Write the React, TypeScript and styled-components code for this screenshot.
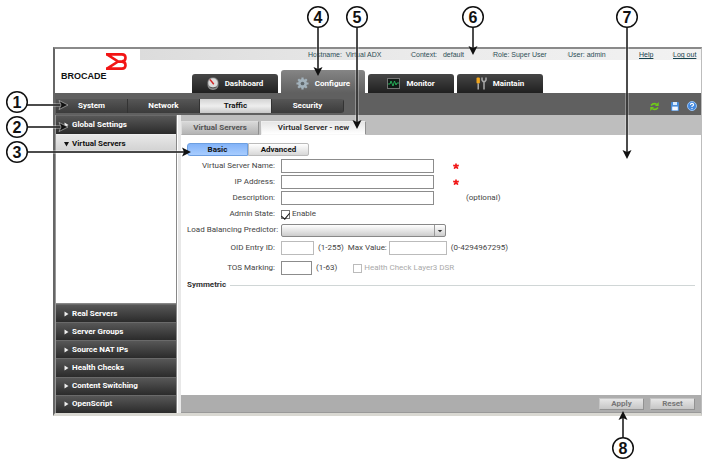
import React from 'react';
import styled, { createGlobalStyle, css } from 'styled-components';

const GlobalStyle = createGlobalStyle`
  * { box-sizing: border-box; }
  body { margin: 0; background: #fff; font-family: Roboto, 'Liberation Sans', Arial, sans-serif; font-size: 8px; line-height: 10px; color: #444; }
  button, input, select { font: inherit; color: inherit; margin: 0; padding: 0; border-radius: 0; }
`;

const Page = styled.div`
  position: relative;
  display: flex;
  min-height: 100vh;
  padding: 47px 0 46px 53px;
`;

const Frame = styled.div`
  flex: 1;
  display: flex;
  flex-direction: column;
  border-style: solid;
  border-width: 2px 1px 3px 2px;
  border-color: #8a8a8a #bdbdbd #d9d8d2 #666;
  min-width: 0;
`;

const Header = styled.header`
  display: flex;
  height: 44px;
`;

const Brand = styled.div`
  display: flex;
  flex-direction: column;
  width: 85px;
  padding: 4px 0 0 6px;
  color: #111;
  font-family: 'Liberation Sans', Arial, sans-serif;
  font-size: 9px;
  font-weight: bold;
  svg { margin-left: 44px; }
`;

const HeaderMain = styled.div`
  flex: 1;
  display: flex;
  flex-direction: column;
  justify-content: space-between;
`;

const InfoBar = styled.div`
  display: grid;
  grid-template-columns: 103px 82px 75px 71px 34px 1fr;
  height: 11px;
  padding-left: 168px;
  background: linear-gradient(90deg, #dcdcdc, #ebebeb 50%, #f2f2f2);
  color: #2d4d55;
  font-family: 'Liberation Sans', Arial, sans-serif;
  font-size: 7px;
  line-height: 11px;
  white-space: nowrap;
  a { color: #17424e; }
`;

const InfoItem = styled.span<{ $divided?: boolean }>`
  white-space: pre;
  ${(p) => p.$divided && css`box-shadow: -5px 0 0 -4px #ddd;`}
`;

const MainNav = styled.nav`
  display: flex;
  align-items: flex-end;
  gap: 3px;
  padding-left: 52px;
`;

const MainTab = styled.button<{ $active?: boolean }>`
  display: flex;
  align-items: center;
  justify-content: center;
  gap: 6px;
  width: ${(p) => (p.$active ? 84 : 86)}px;
  height: ${(p) => (p.$active ? 23 : 19)}px;
  padding-top: ${(p) => (p.$active ? 4 : 0)}px;
  border: 0;
  border-radius: 3px 3px 0 0;
  background: ${(p) => (p.$active ? 'linear-gradient(#858585, #606060)' : 'linear-gradient(#464646, #202020)')};
  color: #fff;
  font-weight: bold;
`;

const SubBar = styled.div`
  display: flex;
  align-items: center;
  justify-content: space-between;
  height: 22px;
  padding: 4px 4px 0 1px;
  background: #606060;
`;

const SubNav = styled.nav`
  display: flex;
  border-radius: 0 3px 3px 0;
  overflow: hidden;
`;

const SubTab = styled.button<{ $active?: boolean }>`
  width: 72px;
  height: 14px;
  border: 0;
  border-right: 1px solid #333;
  background: ${(p) => (p.$active ? 'linear-gradient(#d4d4d4, #eee 50%, #c8c8c8)' : 'linear-gradient(#565656, #3b3b3b)')};
  color: ${(p) => (p.$active ? '#111' : '#fff')};
  font-weight: bold;
`;

const Tools = styled.div`
  display: flex;
  align-items: center;
  gap: 8px;
`;

const ToolButton = styled.button`
  display: flex;
  border: 0;
  background: none;
  &:first-child { margin-right: 4px; }
`;

const Body = styled.div`
  flex: 1;
  display: flex;
`;

const Sidebar = styled.aside`
  display: flex;
  flex-direction: column;
  width: 122px;
  border-left: 1px solid #999;
  border-right: 1px solid #888;
`;

const SideFill = styled.div`
  flex: 1;
`;

const SideItem = styled.button<{ $open?: boolean }>`
  display: flex;
  align-items: center;
  gap: 3px;
  height: 19px;
  padding: 0 8px;
  border: 0;
  border-top: 1px solid ${(p) => (p.$open ? '#eee' : '#6a6a6a')};
  background: ${(p) => (p.$open ? 'linear-gradient(#e8e8e8, #cfcfcf)' : 'linear-gradient(#575757, #2b2b2b)')};
  color: ${(p) => (p.$open ? '#111' : '#fff')};
  font-weight: bold;
  text-align: left;
`;

const SideGroup = styled.div`
  display: grid;
  grid-auto-rows: 1fr;
  height: 110px;
  border-top: 1px solid #888;
  ${SideItem} { height: auto; }
`;

const Content = styled.main`
  flex: 1;
  display: flex;
  flex-direction: column;
  margin-left: 1px;
  border-left: 3px solid #e8e8e8;
  min-width: 0;
`;

const DocTabs = styled.div`
  display: flex;
  align-items: flex-end;
  gap: 2px;
  height: 20px;
  background: #bebebe;
`;

const DocTab = styled.button<{ $active?: boolean }>`
  width: ${(p) => (p.$active ? 105 : 78)}px;
  height: 14px;
  border: 1px solid #8f8f8f;
  border-color: ${(p) => (p.$active ? '#eee #8f8f8f #f8f8f8 #eee' : '#ddd #8f8f8f #aaa #ddd')};
  background: ${(p) => (p.$active ? 'linear-gradient(#e6e6e6, #fff)' : 'linear-gradient(#d8d8d8, #b4b4b4)')};
  color: ${(p) => (p.$active ? '#333' : '#555')};
  font-weight: bold;
`;

const Form = styled.form`
  flex: 1;
  padding: 8px 6px 0;
`;

const ModeSwitch = styled.div`
  display: flex;
  margin-bottom: 2px;
`;

const ModeButton = styled.button<{ $active?: boolean }>`
  width: 61px;
  height: 13px;
  border: 1px solid ${(p) => (p.$active ? '#6d9fe0' : '#bbb')};
  border-radius: ${(p) => (p.$active ? '3px 0 0 3px' : '0 2px 2px 0')};
  background: ${(p) => (p.$active ? 'linear-gradient(#83b3f8, #a8cdff)' : 'linear-gradient(#fff, #d8d8d8)')};
  color: #111;
  font-weight: bold;
`;

const Row = styled.div<{ $tall?: boolean }>`
  display: grid;
  grid-template-columns: 88px 1fr;
  align-items: center;
  column-gap: 6px;
  height: ${(p) => (p.$tall ? 20 : 16)}px;
`;

const Label = styled.label<{ $disabled?: boolean }>`
  color: ${(p) => (p.$disabled ? '#aaa' : '#444')};
  text-align: right;
  white-space: nowrap;
`;

const Fields = styled.div`
  display: flex;
  align-items: center;
  white-space: nowrap;
`;

const TextInput = styled.input<{ $width: number; $light?: boolean }>`
  width: ${(p) => p.$width}px;
  height: 14px;
  border: 1px solid ${(p) => (p.$light ? '#bbb' : '#8c8c8c')};
  background: #fff;
  padding: 0 2px;
`;

const Required = styled.span`
  display: flex;
  margin-left: 19px;
`;

const Note = styled.span`
  margin-left: 32px;
`;

const Range = styled.span`
  margin: 0 4px;
`;

const Check = styled.input`
  appearance: none;
  display: grid;
  place-items: center;
  width: 9px;
  height: 9px;
  margin-right: 2px;
  border: 1px solid #777;
  background: #fff;
  &:disabled { border-color: #bbb; }
  &:checked::after {
    content: '';
    width: 4px;
    height: 7px;
    border: solid #111;
    border-width: 0 1px 1px 0;
    transform: rotate(40deg);
  }
`;

const HealthCheck = styled.div`
  display: flex;
  align-items: center;
  margin-left: 12px;
`;

const SelectWrap = styled.div`
  display: grid;
  grid-template-columns: 1fr 11px;
  width: 165px;
  height: 13px;
  border: 1px solid #888;
  border-radius: 2px;
  background: linear-gradient(#fff, #ccc);
  select { grid-area: 1 / 1 / 2 / 3; appearance: none; border: 0; background: none; }
  svg { grid-area: 1 / 2; border-left: 1px solid #999; pointer-events: none; }
`;

const Fieldset = styled.div`
  display: flex;
  align-items: center;
  gap: 4px;
  height: 14px;
  color: #333;
  font-weight: bold;
  &::after { content: ''; flex: 1; height: 1px; background: #d0d6d6; }
`;

const Footer = styled.footer`
  display: flex;
  align-items: center;
  justify-content: flex-end;
  gap: 6px;
  height: 18px;
  padding-right: 6px;
  background: #adadad;
  border-bottom: 1px solid #999;
`;

const ActionButton = styled.button`
  width: 45px;
  height: 12px;
  border: 1px solid #c5c5c5;
  border-right-color: #929292;
  border-bottom-color: #929292;
  background: linear-gradient(#e6e6e6, #c6c6c6);
  color: #777;
  font-weight: bold;
`;

const CalloutLayer = styled.svg`
  position: absolute;
  top: 0;
  left: 0;
  pointer-events: none;
  text { font-family: 'Liberation Sans', Arial, sans-serif; font-size: 16px; font-weight: bold; text-anchor: middle; fill: #111; }
`;

const BrandMark = () => (
  <svg width="23" height="18" viewBox="0 0 23 18" fill="none" stroke="#f21515" strokeWidth="2.6">
    <path d="M1 1.4H17Q20.5 1.4 20.5 4.8T17 8.4L12.5 8.5 17 8.6Q20.5 8.8 20.5 12.2T17 15.6H1M2 1.4L13 8.5 2 15.6" />
  </svg>
);

const DialIcon = () => (
  <svg width="12" height="14" viewBox="0 0 12 14">
    <rect x=".5" y=".5" width="11" height="12.5" rx="5" fill="#8a8a8a" />
    <circle cx="6" cy="6" r="4.7" fill="#dcdcdc" />
    <path d="M3 2.5L6.8 7.2" stroke="#d32525" strokeWidth="1.4" />
    <path d="M2.5 10Q6 12 9.5 10" stroke="#555" fill="none" />
  </svg>
);

const GearIcon = () => (
  <svg width="13" height="13" viewBox="-7 -7 14 14">
    <g stroke="#a3b2bc" strokeWidth="2.4">
      <path d="M0-6.5V6.5M-6.5 0H6.5M-4.6-4.6L4.6 4.6M4.6-4.6L-4.6 4.6" />
    </g>
    <circle r="4.8" fill="#a3b2bc" />
    <circle r="2" fill="#5f676c" />
  </svg>
);

const PulseIcon = () => (
  <svg width="13" height="11" viewBox="0 0 13 11">
    <rect x=".5" y=".5" width="12" height="10" fill="#101a15" stroke="#747474" />
    <path d="M1 6H3L4 3 6 8 7.5 3 9 7 10 5H12" stroke="#26b55b" fill="none" strokeWidth=".9" />
  </svg>
);

const ToolsIcon = () => (
  <svg width="11" height="13" viewBox="0 0 11 13">
    <rect x=".5" y=".5" width="3.4" height="6" rx="1" fill="#f2a61c" />
    <path d="M2.2 6.5V12.5" stroke="#bbb" strokeWidth="1.3" />
    <path d="M6 .5V3L7 4.4H9L10 3V.5M8 4V12.5" stroke="#aaa" strokeWidth="1.5" fill="none" />
  </svg>
);

const RefreshIcon = () => (
  <svg width="9" height="9" viewBox="0 0 9 9" fill="none" stroke="#6fcb18" strokeWidth="1.6">
    <path d="M1 3.4Q3.5.3 6.7 2.4M8 5.6Q5.5 8.7 2.3 6.6" />
    <path d="M8.7 0V4H5ZM.3 9V5H4Z" fill="#6fcb18" stroke="none" />
  </svg>
);

const SaveIcon = () => (
  <svg width="8" height="9" viewBox="0 0 8 9">
    <rect width="8" height="9" rx="1" fill="#4a8dd8" />
    <rect x="2" width="4" height="3" fill="#d9ebff" />
    <rect x="1.2" y="4.6" width="5.6" height="3.8" fill="#f4f8ff" />
  </svg>
);

const HelpIcon = () => (
  <svg width="10" height="10" viewBox="0 0 10 10">
    <circle cx="5" cy="5" r="4.5" fill="#4388df" stroke="#9ac3f2" />
    <path d="M3.4 3.9Q3.5 2.4 5 2.4T6.6 3.8Q6.6 4.7 5 5.3V6.1M5 6.9V8" fill="none" stroke="#fff" strokeWidth="1.1" />
  </svg>
);

const StarIcon = () => (
  <svg width="6" height="6" viewBox="0 0 6 6" stroke="#f01818" strokeWidth="1.7">
    <path d="M3 3V.5M3 3L.2 2.4M3 3L5.8 2.4M3 3L1.2 5.7M3 3L4.8 5.7" />
  </svg>
);

const Arrow = ({ open }: { open?: boolean }) => (
  <svg width="5" height="6" viewBox="0 0 5 6">
    {open ? <path d="M0 1H5L2.5 5.5Z" fill="#111" /> : <path d="M.5.5L4.5 3 .5 5.5Z" fill="#eee" />}
  </svg>
);

type Callout = { n: number; x: number; y: number; tipX: number; tipY: number };

const callouts: Callout[] = [
  { n: 1, x: 17, y: 102, tipX: 68, tipY: 105 },
  { n: 2, x: 17, y: 127, tipX: 68, tipY: 127 },
  { n: 3, x: 17, y: 152, tipX: 191, tipY: 152 },
  { n: 4, x: 318, y: 17, tipX: 318, tipY: 76 },
  { n: 5, x: 357, y: 17, tipX: 357, tipY: 129 },
  { n: 6, x: 473, y: 17, tipX: 473, tipY: 55 },
  { n: 7, x: 627, y: 17, tipX: 627, tipY: 159 },
  { n: 8, x: 623, y: 448, tipX: 623, tipY: 411 },
];

const CalloutMark = ({ n, x, y, tipX, tipY }: Callout) => {
  const horizontal = tipX !== x;
  const down = tipY > y;
  const angle = horizontal ? 0 : down ? 90 : -90;
  const line = horizontal
    ? `M${x + 10} ${tipY}H${tipX - 5}`
    : `M${x} ${down ? y + 10 : y - 10}V${down ? tipY - 5 : tipY + 5}`;
  return (
    <g>
      <path d={line} stroke="#fff" strokeWidth="3" opacity=".6" />
      <path d={line} stroke="#111" strokeWidth="1.5" />
      <path
        d="M0 0L-9-4.5-7 0-9 4.5Z"
        fill="#111"
        stroke={n < 3 ? '#ccc' : 'none'}
        strokeWidth=".6"
        transform={`translate(${tipX} ${tipY}) rotate(${angle})`}
      />
      <circle cx={x} cy={y} r="10.3" fill="#fff" stroke="#111" strokeWidth="1.5" />
      <text x={x} y={y + 6}>{n}</text>
    </g>
  );
};

const sections = ['Real Servers', 'Server Groups', 'Source NAT IPs', 'Health Checks', 'Content Switching', 'OpenScript'];

export default function App() {
  return (
    <Page>
      <GlobalStyle />
      <Frame>
        <Header>
          <Brand>
            <BrandMark />
            BROCADE
          </Brand>
          <HeaderMain>
            <InfoBar>
              <InfoItem>Hostname:  Virtual ADX</InfoItem>
              <InfoItem $divided>Context:   default</InfoItem>
              <InfoItem $divided>Role: Super User</InfoItem>
              <InfoItem $divided>User: admin</InfoItem>
              <InfoItem><a href="#help">Help</a></InfoItem>
              <InfoItem $divided><a href="#logout">Log out</a></InfoItem>
            </InfoBar>
            <MainNav>
              <MainTab><DialIcon />Dashboard</MainTab>
              <MainTab $active><GearIcon />Configure</MainTab>
              <MainTab><PulseIcon />Monitor</MainTab>
              <MainTab><ToolsIcon />Maintain</MainTab>
            </MainNav>
          </HeaderMain>
        </Header>
        <SubBar>
          <SubNav>
            <SubTab>System</SubTab>
            <SubTab>Network</SubTab>
            <SubTab $active>Traffic</SubTab>
            <SubTab>Security</SubTab>
          </SubNav>
          <Tools>
            <ToolButton aria-label="Refresh"><RefreshIcon /></ToolButton>
            <ToolButton aria-label="Save"><SaveIcon /></ToolButton>
            <ToolButton aria-label="Help"><HelpIcon /></ToolButton>
          </Tools>
        </SubBar>
        <Body>
          <Sidebar>
            <SideItem><Arrow />Global Settings</SideItem>
            <SideItem $open><Arrow open />Virtual Servers</SideItem>
            <SideFill />
            <SideGroup>
              {sections.map((name) => <SideItem key={name}><Arrow />{name}</SideItem>)}
            </SideGroup>
          </Sidebar>
          <Content>
            <DocTabs>
              <DocTab>Virtual Servers</DocTab>
              <DocTab $active>Virtual Server - new</DocTab>
            </DocTabs>
            <Form id="server-form" onSubmit={(e) => e.preventDefault()}>
              <ModeSwitch>
                <ModeButton type="button" $active>Basic</ModeButton>
                <ModeButton type="button">Advanced</ModeButton>
              </ModeSwitch>
              <Row>
                <Label htmlFor="name">Virtual Server Name:</Label>
                <Fields><TextInput id="name" $width={153} /><Required><StarIcon /></Required></Fields>
              </Row>
              <Row>
                <Label htmlFor="ip">IP Address:</Label>
                <Fields><TextInput id="ip" $width={153} /><Required><StarIcon /></Required></Fields>
              </Row>
              <Row>
                <Label htmlFor="description">Description:</Label>
                <Fields><TextInput id="description" $width={153} /><Note>(optional)</Note></Fields>
              </Row>
              <Row>
                <Label as="span">Admin State:</Label>
                <Fields><Check id="enable" type="checkbox" defaultChecked /><Label htmlFor="enable">Enable</Label></Fields>
              </Row>
              <Row>
                <Label htmlFor="predictor">Load Balancing Predictor:</Label>
                <SelectWrap>
                  <select id="predictor"><option value="" /></select>
                  <svg width="11" height="11" viewBox="0 0 11 11"><path d="M3 5H8L5.5 7.5Z" fill="#333" /></svg>
                </SelectWrap>
              </Row>
              <Row $tall>
                <Label htmlFor="oid">OID Entry ID:</Label>
                <Fields>
                  <TextInput id="oid" $width={33} $light />
                  <Range>(1-255)</Range>
                  <Label htmlFor="max">Max Value:&nbsp;</Label>
                  <TextInput id="max" $width={58} $light />
                  <Range>(0-4294967295)</Range>
                </Fields>
              </Row>
              <Row $tall>
                <Label htmlFor="tos">TOS Marking:</Label>
                <Fields>
                  <TextInput id="tos" $width={31} />
                  <Range>(1-63)</Range>
                  <HealthCheck>
                    <Check id="dsr" type="checkbox" disabled />
                    <Label htmlFor="dsr" $disabled>Health Check Layer3 DSR</Label>
                  </HealthCheck>
                </Fields>
              </Row>
              <Fieldset>Symmetric</Fieldset>
            </Form>
            <Footer>
              <ActionButton type="submit" form="server-form">Apply</ActionButton>
              <ActionButton type="reset" form="server-form">Reset</ActionButton>
            </Footer>
          </Content>
        </Body>
      </Frame>
      <CalloutLayer width="702" height="462" viewBox="0 0 702 462">
        {callouts.map((c) => <CalloutMark key={c.n} {...c} />)}
      </CalloutLayer>
    </Page>
  );
}
